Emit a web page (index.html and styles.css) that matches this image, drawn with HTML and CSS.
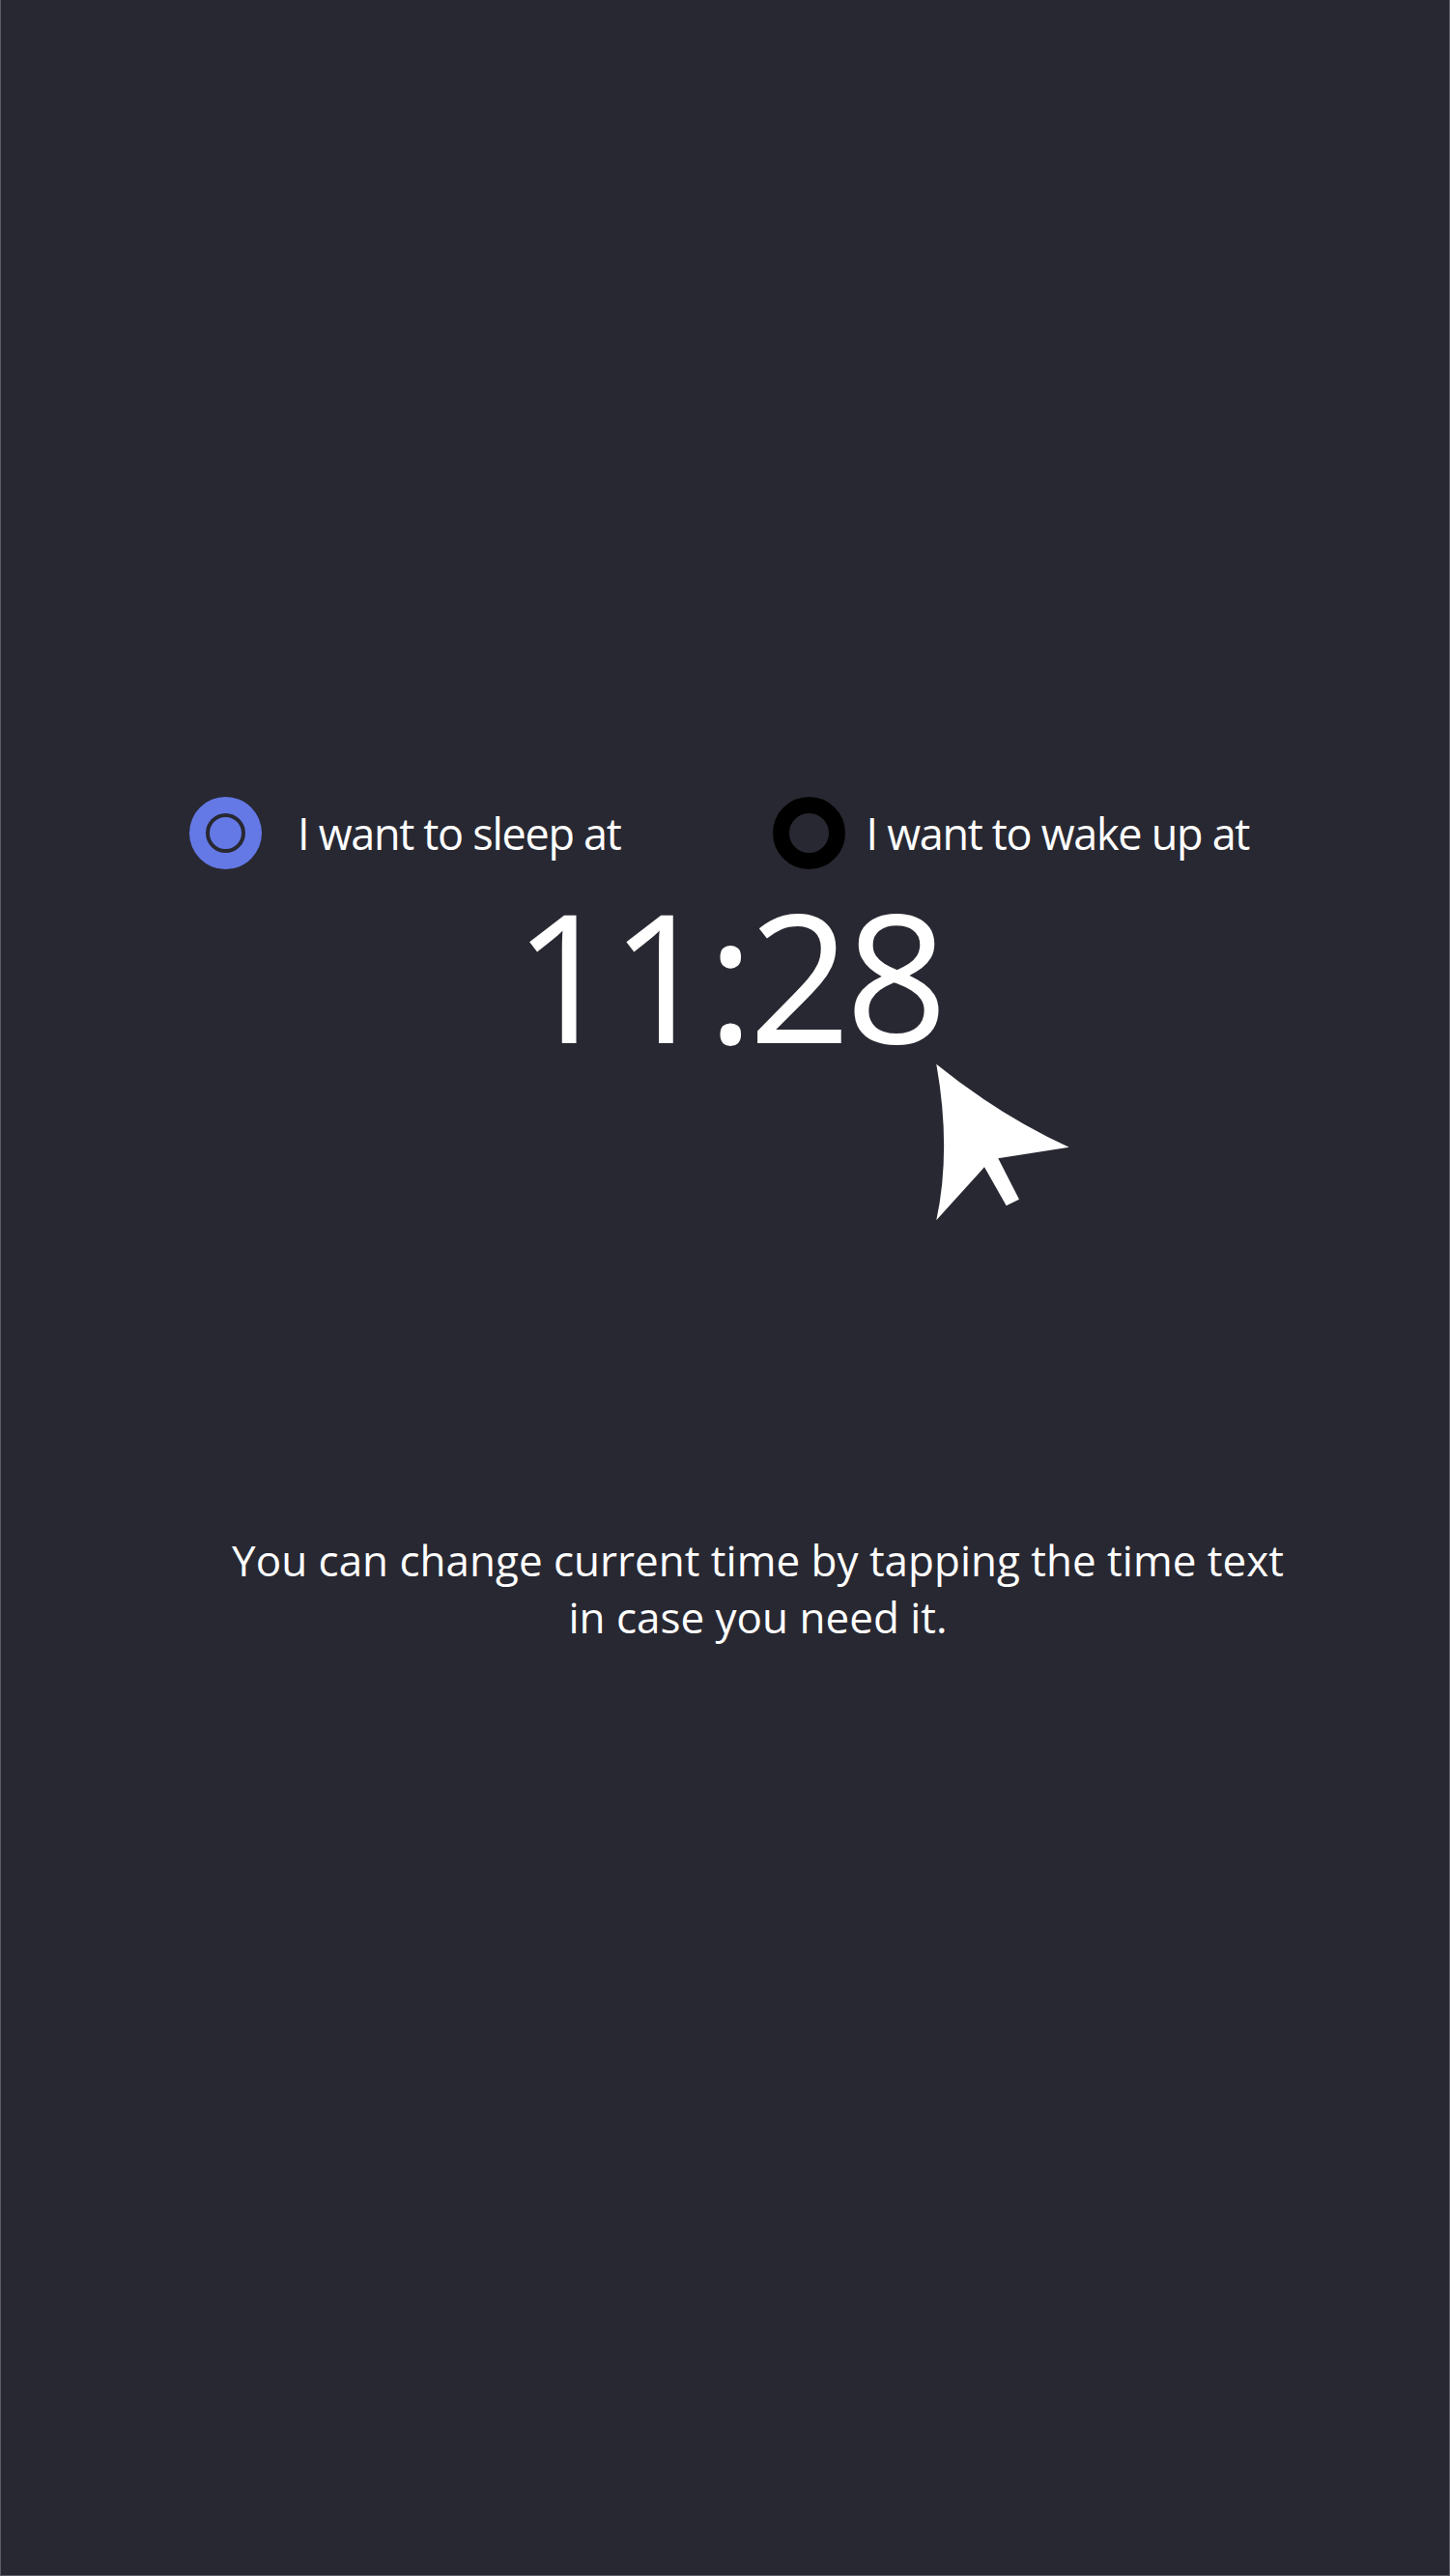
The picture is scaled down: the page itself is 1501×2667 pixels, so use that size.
FILE: index.html
```html
<!DOCTYPE html>
<html>
<head>
<meta charset="utf-8">
<link rel="stylesheet" href="styles.css">
</head>
<body>
<div class="screen">
  <div class="options">
    <div class="option option-sleep">
      <span class="radio radio-on"><span class="radio-dot"></span></span>
      <span class="label">I want to sleep at</span>
    </div>
    <div class="option option-wake">
      <span class="radio radio-off"></span>
      <span class="label">I want to wake up at</span>
    </div>
  </div>
  <div class="clock">11:28</div>
  <p class="hint">You can change current time by tapping the time text<br>in case you need it.</p>
  <svg class="cursor" width="200" height="200" viewBox="0 0 200 200">
    <path d="M29.3 21.7 Q95 75 166.7 107.7 L93.3 119.3 L115 161.7 L101.7 168.3 L79 128.3 L29.3 183.3 Q45 110 29.3 21.7 Z" fill="#ffffff"/>
  </svg>
</div>
</body>
</html>
```
FILE: styles.css
```css
html, body {
  margin: 0;
  padding: 0;
  background: #282832;
}
.screen {
  position: relative;
  box-sizing: border-box;
  width: 1501px;
  height: 2667px;
  background: #282832;
  border-left: 1px solid #5c5c66;
  border-right: 1px solid #5c5c66;
  border-bottom: 1px solid #5c5c66;
  padding-top: 825px;
  font-family: "Open Sans", "Noto Sans", sans-serif;
  color: #ffffff;
}
.options {
  display: flex;
  align-items: center;
  padding-left: 195px;
  height: 75px;
}
.option {
  display: flex;
  align-items: center;
}
.option-sleep {
  gap: 37px;
}
.option-wake {
  gap: 21px;
  margin-left: 158px;
}
.radio {
  box-sizing: border-box;
  width: 75px;
  height: 75px;
  border-radius: 50%;
  display: flex;
  align-items: center;
  justify-content: center;
  flex: none;
}
.radio-on {
  background: #6479e6;
}
.radio-dot {
  box-sizing: border-box;
  width: 41px;
  height: 41px;
  border-radius: 50%;
  border: 4px solid #282832;
}
.radio-off {
  border: 17px solid #000000;
}
.label {
  font-size: 45px;
  letter-spacing: -1.3px;
  line-height: 75px;
  white-space: nowrap;
}
.clock {
  margin-top: 16px;
  font-size: 185px;
  letter-spacing: -5.5px;
  line-height: 185px;
  text-align: center;
  padding-left: 6px;
}
.hint {
  margin: 485px 0 0 0;
  padding-left: 68px;
  font-size: 44px;
  line-height: 59px;
  text-align: center;
}
.cursor {
  position: absolute;
  left: 939px;
  top: 1080px;
}
```
